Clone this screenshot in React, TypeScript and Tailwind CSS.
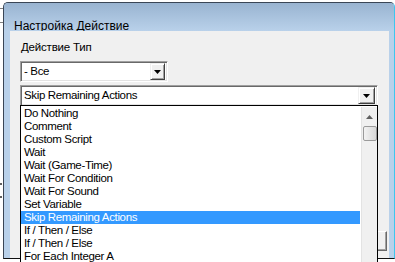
import React from "react";

const items = [
  "Do Nothing",
  "Comment",
  "Custom Script",
  "Wait",
  "Wait (Game-Time)",
  "Wait For Condition",
  "Wait For Sound",
  "Set Variable",
  "Skip Remaining Actions",
  "If / Then / Else",
  "If / Then / Else",
  "For Each Integer A",
];

function Arrow() {
  return (
    <svg width="7" height="4" viewBox="0 0 7 4" className="block">
      <path d="M0 0H7L3.5 4Z" fill="#000" />
    </svg>
  );
}

function DropButton({ w, h }: { w: string; h: string }) {
  return (
    <div
      className={`${w} ${h} flex items-center justify-center bg-[#f0f0f0] border border-t-[#f0f0f0] border-l-[#f0f0f0] border-r-[#404040] border-b-[#404040] shadow-[inset_1px_1px_0_#ffffff,inset_-1px_-1px_0_#a0a0a0]`}
    >
      <Arrow />
    </div>
  );
}

function Combo({ text, width, btnW }: { text: string; width: string; btnW: string }) {
  return (
    <div
      className={`${width} h-[21px] flex items-center bg-white border border-t-[#a0a0a0] border-l-[#a0a0a0] border-r-white border-b-white shadow-[inset_1px_1px_0_#696969,inset_-1px_-1px_0_#e3e3e3] pl-[3px] pr-[2px]`}
    >
      <span className="flex-1 text-[11.5px] leading-[13px] tracking-[-0.35px] text-black">{text}</span>
      <DropButton w={btnW} h="h-[17px]" />
    </div>
  );
}

export default function App() {
  return (
    <div
      className="relative w-[395px] h-[262px] overflow-hidden bg-white"
      style={{ fontFamily: '"Liberation Sans", Arial, sans-serif' }}
    >
      <div className="absolute left-0 top-[8px] w-[3px] h-px bg-[#808080]" />
      <div className="absolute left-0 top-[22px] w-[3px] h-px bg-[#808080]" />
      <div className="absolute left-0 top-[183px] w-[2px] h-[2px] bg-[#606060]" />
      <div className="absolute left-0 top-[196px] w-[2px] h-[2px] bg-[#606060]" />
      <div className="flex h-full pl-[3px] pt-[2px]">
        <div className="w-[392px] h-[257px] flex flex-col bg-[#b9d1ea] border border-t-[#3a4656] border-l-[#3a4656] border-r-[#3ec6ef] border-b-[#101010] rounded-t-[5px] overflow-hidden">
          <div className="h-[28px] shrink-0 bg-gradient-to-b from-[#99b4d1] to-[#b9d1ea] pl-[10px] pt-[10px]">
            <span className="text-[12px] leading-[14px] text-black">Настройка Действие</span>
          </div>
          <div className="flex-1 mx-[5px] ml-[6px] bg-[#f0f0f0] flex flex-col pl-[10px]">
            <div className="pt-[10px] pl-[1px] text-[11.5px] leading-[13px] tracking-[-0.2px] text-black">Действие Тип</div>
            <div className="mt-[7px]">
              <Combo text="- Все" width="w-[148px]" btnW="w-[15px]" />
            </div>
            <div className="mt-[3px]">
              <Combo text="Skip Remaining Actions" width="w-[358px]" btnW="w-[17px]" />
            </div>
            <div className="flex-1" />
            <div className="flex justify-end pr-[2px] pb-[7px]">
              <div className="w-[60px] h-[20px] border border-t-white border-l-white border-r-[#696969] border-b-[#696969] shadow-[inset_-1px_-1px_0_#a0a0a0]" />
            </div>
          </div>
        </div>
      </div>

      <div className="absolute left-[20px] top-[105px] w-[358px] h-[170px] bg-white border border-black flex pt-[1px]">
        <div className="flex-1 flex flex-col">
          {items.map((it, i) => (
            <div
              key={i}
              className={`h-[13px] shrink-0 pl-[3px] text-[11.5px] leading-[13px] tracking-[-0.35px] whitespace-nowrap ${
                i === 8 ? "bg-[#3399ff] text-white" : "text-black"
              }`}
            >
              {it}
            </div>
          ))}
        </div>
        <div className="w-[16px] ml-[1px] bg-[#f0f0f0] border-l border-[#e3e3e3] flex flex-col items-center">
          <div className="h-[18px] flex items-center justify-center pt-[1px]">
            <svg width="7" height="4" viewBox="0 0 7 4">
              <path d="M3.5 0L7 4H0Z" fill="#606060" />
            </svg>
          </div>
          <div className="mt-[1px] w-[14px] h-[15px] rounded-[2px] border border-[#9a9a9a] bg-gradient-to-r from-[#f2f2f2] to-[#d8d8d8]" />
        </div>
      </div>
    </div>
  );
}
